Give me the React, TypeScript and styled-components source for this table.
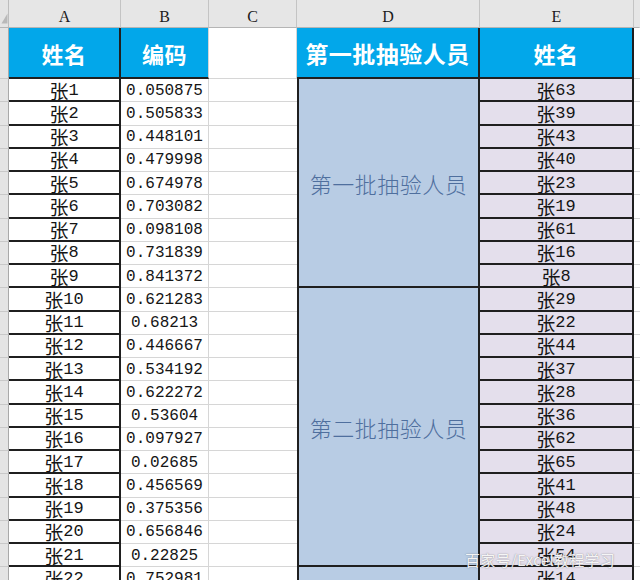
import React from "react";
import styled, { createGlobalStyle } from "styled-components";

const Global = createGlobalStyle`
  html, body { margin: 0; padding: 0; background: #ffffff; overflow: hidden; }
  body { width: 640px; height: 580px; }
`;

const ROW_H = 23.25;
const DARK = "#1f1f1f";
const GRID = "#d6d6d6";
const CJK = `"Noto Sans CJK SC", sans-serif`;
const MONO = `"Liberation Mono", "Noto Sans CJK SC", monospace`;

const Sheet = styled.div`
  position: relative;
  display: grid;
  grid-template-columns: 9px 112px 88px 88px 183px 154px 1fr;
  grid-template-rows: 28px 51px repeat(22, ${ROW_H}px);
  width: 640px;
  height: 580px;
  overflow: hidden;
  background: #ffffff;
  & > * { box-sizing: border-box; min-width: 0; min-height: 0; }
`;

const Corner = styled.div`
  background: #e4e4e4;
  border-right: 1px solid #bdbdbd;
  border-bottom: 1px solid #b5b5b5;
  display: flex;
  align-items: flex-end;
  padding: 0 0 3px 1px;
`;

const ColHead = styled.div<{ $last?: boolean }>`
  background: #e6e6e6;
  border-right: 1px solid ${(p) => (p.$last ? "#e6e6e6" : "#c4c4c4")};
  border-bottom: 1px solid #b5b5b5;
  display: flex;
  align-items: center;
  justify-content: center;
  padding-top: 7px;
  font-family: "Liberation Serif", serif;
  font-size: 16px;
  color: #1c1c1c;
`;

const RowHead = styled.div`
  background: #e4e4e4;
  border-right: 1px solid #a9a9a9;
  border-bottom: 1px solid #c9c9c9;
`;

const TitleCell = styled.div<{ $blue?: boolean; $dark?: boolean; $size?: number }>`
  background: ${(p) => (p.$blue ? "#02a7ea" : "#ffffff")};
  border-right: ${(p) => (p.$dark ? `2px solid ${DARK}` : `1px solid ${GRID}`)};
  border-bottom: ${(p) => (p.$blue ? `2px solid ${DARK}` : `1px solid ${GRID}`)};
  display: flex;
  align-items: center;
  justify-content: center;
  padding-top: 1px;
  font-family: ${CJK};
  font-weight: 700;
  font-size: ${(p) => p.$size ?? 22}px;
  letter-spacing: 0.5px;
  color: #ffffff;
  white-space: nowrap;
`;

const NameCell = styled.div<{ $fill?: string }>`
  background: ${(p) => p.$fill ?? "#ffffff"};
  border-right: 2px solid ${DARK};
  border-bottom: 2px solid ${DARK};
  display: flex;
  align-items: center;
  justify-content: center;
  padding-top: 1px;
  font-family: ${MONO};
  font-size: 17px;
  color: #151515;
  line-height: 1;
  white-space: nowrap;
`;

const Surname = styled.span`
  font-family: ${CJK};
  font-size: 19px;
  font-weight: 400;
  line-height: 1;
`;

const NumCell = styled.div`
  border-right: 1px solid ${GRID};
  border-bottom: 1px solid ${GRID};
  display: flex;
  align-items: center;
  justify-content: center;
  padding-top: 1px;
  font-family: ${MONO};
  font-size: 16px;
  color: #151515;
  white-space: nowrap;
`;

const EmptyCell = styled.div`
  border-bottom: 1px solid ${GRID};
`;

const BatchCell = styled.div<{ $span: number }>`
  grid-row: span ${(p) => p.$span};
  background: #b8cce4;
  border-left: 2px solid ${DARK};
  border-right: 2px solid ${DARK};
  border-bottom: 2px solid ${DARK};
  display: flex;
  align-items: center;
  justify-content: center;
  font-family: ${CJK};
  font-size: 22px;
  font-weight: 300;
  letter-spacing: 0.5px;
  color: #4f6f9e;
  white-space: nowrap;
`;

const Filler = styled.div`
  border-bottom: 1px solid ${GRID};
`;

const Watermark = styled.div`
  position: absolute;
  left: 465px;
  top: 549px;
  font-family: ${CJK};
  font-size: 15px;
  color: rgba(255, 255, 255, 0.92);
  text-shadow: 0 0 1px rgba(90, 90, 90, 0.55), 0 0 2px rgba(90, 90, 90, 0.3);
  white-space: nowrap;
  letter-spacing: 0.3px;
`;

const rowsA: [number, string][] = [
  [1, "0.050875"], [2, "0.505833"], [3, "0.448101"], [4, "0.479998"],
  [5, "0.674978"], [6, "0.703082"], [7, "0.098108"], [8, "0.731839"],
  [9, "0.841372"], [10, "0.621283"], [11, "0.68213"], [12, "0.446667"],
  [13, "0.534192"], [14, "0.622272"], [15, "0.53604"], [16, "0.097927"],
  [17, "0.02685"], [18, "0.456569"], [19, "0.375356"], [20, "0.656846"],
  [21, "0.22825"], [22, "0.752981"],
];

const colE = [63, 39, 43, 40, 23, 19, 61, 16, 8, 29, 22, 44, 37, 28, 36, 62, 65, 41, 48, 24, 54, 14];

const batches: Record<number, { span: number; label: string }> = {
  0: { span: 9, label: "第一批抽验人员" },
  9: { span: 12, label: "第二批抽验人员" },
  21: { span: 1, label: "" },
};

const CornerMark = () => (
  <svg width="7" height="11" viewBox="0 0 7 11">
    <path d="M6.5 0.5 L6.5 10.5 L0.5 10.5 Z" fill="#b9b9b9" />
  </svg>
);

export default function App() {
  return (
    <>
      <Global />
      <Sheet>
        <Corner>
          <CornerMark />
        </Corner>
        {["A", "B", "C", "D", "E"].map((c) => (
          <ColHead key={c}>{c}</ColHead>
        ))}
        <ColHead $last />

        <RowHead />
        <TitleCell $blue $dark>姓名</TitleCell>
        <TitleCell $blue>编码</TitleCell>
        <TitleCell />
        <TitleCell $blue $dark $size={23}>第一批抽验人员</TitleCell>
        <TitleCell $blue $dark>姓名</TitleCell>
        <Filler />

        {rowsA.map(([n, v], i) => (
          <React.Fragment key={n}>
            <RowHead />
            <NameCell>
              <Surname>张</Surname>
              {n}
            </NameCell>
            <NumCell>{v}</NumCell>
            <EmptyCell />
            {batches[i] && <BatchCell $span={batches[i].span}>{batches[i].label}</BatchCell>}
            <NameCell $fill="#e4dfec">
              <Surname>张</Surname>
              {colE[i]}
            </NameCell>
            <Filler />
          </React.Fragment>
        ))}
        <Watermark>百家号/Excel教程学习</Watermark>
      </Sheet>
    </>
  );
}
